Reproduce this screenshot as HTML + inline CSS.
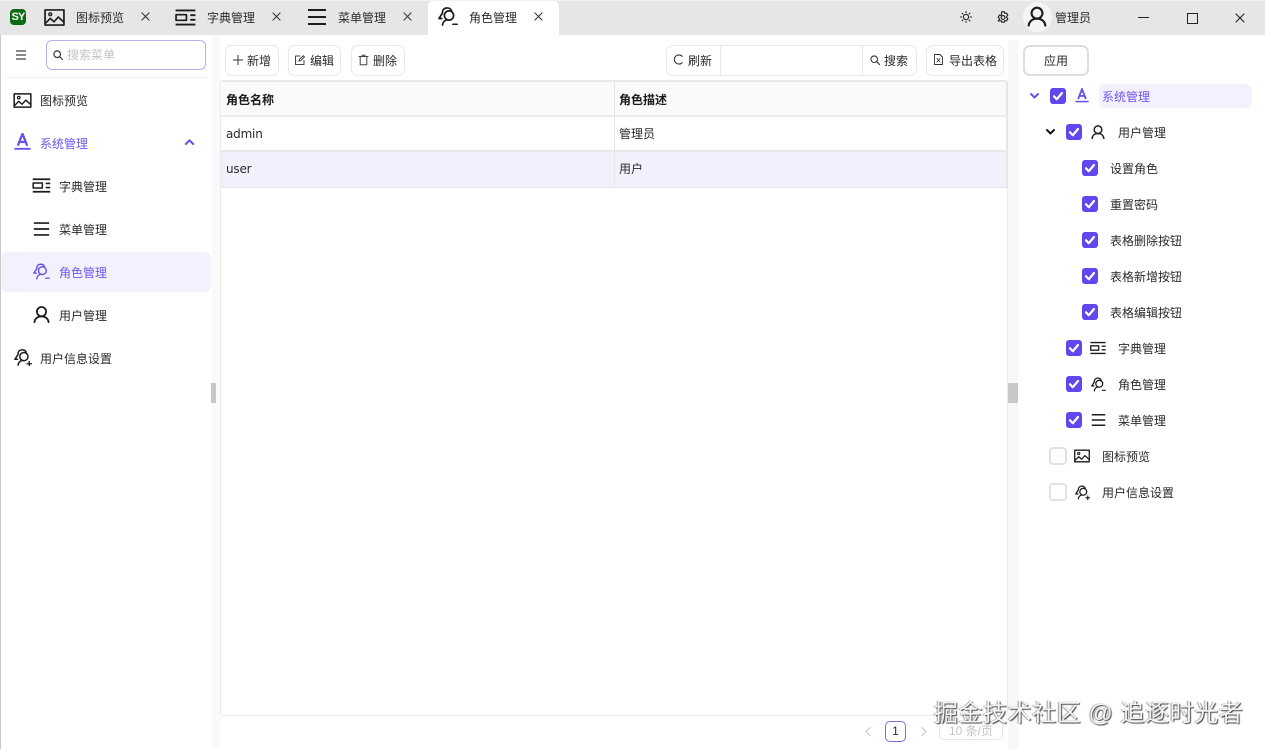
<!DOCTYPE html>
<html lang="zh"><head><meta charset="utf-8"><title>角色管理</title>
<style>
*{box-sizing:border-box}
html,body{margin:0;padding:0;width:1265px;height:749px;overflow:hidden;background:#fff;font-family:"Liberation Sans","Noto Sans CJK SC",sans-serif;font-size:12px;color:#2a2a2a}
.a{position:absolute}
.t{position:absolute;line-height:18px;height:18px;white-space:nowrap;font-size:12px;margin-top:1px}
.p{color:#6f55ee}
svg.i{position:absolute;overflow:visible;fill:none;stroke:#1c1c1c;stroke-width:2;stroke-linecap:round;stroke-linejoin:round}
svg.p2{stroke:#6a50ec}
.btn{position:absolute;top:45px;height:31px;border:1px solid #e9e9e9;border-radius:7px;background:#fff;box-shadow:0 0 1px #eee}
.cb{position:absolute;width:16px;height:16px;border-radius:3px;background:#6049ec}
.cb svg{position:absolute;left:2px;top:2px;width:12px;height:12px;fill:none;stroke:#fff;stroke-width:2.2;stroke-linecap:round;stroke-linejoin:round}
.un{position:absolute;width:18px;height:18px;border-radius:4px;background:#fff;border:2px solid #e2e2e2}
.wm{position:absolute;left:934px;top:698px;font-size:24px;line-height:32px;letter-spacing:.55px;white-space:nowrap;color:#f4f4f4;text-shadow:1px 1px 1px #444,-1px 0 1px #999;font-family:"Liberation Sans","Noto Sans CJK SC",sans-serif}
.cell{position:absolute;line-height:18px;height:18px;font-size:12px;white-space:nowrap}
.en{font-family:"DejaVu Sans",sans-serif;font-size:12px;letter-spacing:-.2px}
</style></head><body>
<svg width="0" height="0" style="position:absolute"><defs>
<symbol id="img" viewBox="0 0 22 18"><rect x="1" y="1" width="20" height="16" fill="none" stroke-width="1.8"/><circle cx="6.5" cy="5.5" r="1.5" stroke-width="1.5"/><path d="M1.5 15l5-5 4 3.500 4.500-5 6 5.500" stroke-width="1.700"/></symbol>
<symbol id="dict" viewBox="0 0 22 18"><path d="M0.500 1.500h21M0.500 16.500h21" stroke-width="2" stroke-linecap="butt"/><rect x="1" y="6" width="11" height="6" stroke-width="1.800"/><path d="M16 6.500h5.500M16 11.500h5.500" stroke-width="2" stroke-linecap="butt"/></symbol>
<symbol id="menu" viewBox="0 0 20 18"><path d="M1 2h18M1 9h18M1 16h18" stroke-linecap="butt" stroke-width="2"/></symbol>
<symbol id="role" viewBox="0 0 20 19"><circle cx="11" cy="8.500" r="4.600" stroke-width="1.700"/><path d="M13.500 3.500C12.500 1.500 10.500 .8 8.500 1 5.500 1.300 4.300 3.500 4.500 6L1 11.500h2.800M4.500 18c.3-3 2.500-5 5-5.300" stroke-width="1.700"/><path d="M14.800 17.300h4.400" stroke-width="1.500"/></symbol>
<symbol id="roleadd" viewBox="0 0 20 19"><circle cx="11" cy="8.500" r="4.600" stroke-width="1.700"/><path d="M13.500 3.500C12.500 1.500 10.500 .8 8.500 1 5.500 1.300 4.300 3.500 4.500 6L1 11.500h2.800M4.500 18c.3-3 2.500-5 5-5.300" stroke-width="1.700"/><path d="M14.500 16.500h5M17 14v5" stroke-width="1.500"/></symbol>
<symbol id="user" viewBox="0 0 18 18"><circle cx="9" cy="6" r="4.900" stroke-width="1.900"/><path d="M1.500 17.200c.4-3.900 3.400-6.200 7.500-6.200s7.100 2.300 7.500 6.200" stroke-width="1.900"/></symbol>
<symbol id="A" viewBox="0 0 18 18"><path d="M4 13.500L9 .8l5 12.700M5.600 9.500h6.800" stroke-width="2.400" stroke-linecap="butt" stroke-linejoin="miter"/><path d="M0.500 16.800h17" stroke-width="2" stroke-linecap="butt"/></symbol>
<symbol id="x" viewBox="0 0 10 10"><path d="M1 1l8 8M9 1l-8 8" stroke-width="1.100"/></symbol>
<symbol id="ok" viewBox="0 0 12 12"><path d="M2 6.300l2.800 2.900L10 3"/></symbol>
</defs></svg>

<!-- title bar -->
<div class="a" style="left:0;top:0;width:1265px;height:35px;background:#e6e6e6;border-top:1px solid #f2f2f2"></div>
<div class="a" style="left:10px;top:9px;width:16px;height:16px;background:#0b6a13;border-radius:4px;color:#fff;font-size:11px;font-weight:bold;line-height:16px;text-align:center;letter-spacing:-.8px">SY</div>
<svg class="i" style="left:44px;top:9px" width="21" height="17"><use href="#img"/></svg>
<div class="t" style="left:76px;top:8px">图标预览</div>
<svg class="i" style="left:141px;top:12px;stroke:#333" width="9" height="9"><use href="#x"/></svg>
<svg class="i" style="left:175px;top:9px" width="21" height="17"><use href="#dict"/></svg>
<div class="t" style="left:207px;top:8px">字典管理</div>
<svg class="i" style="left:272px;top:12px;stroke:#333" width="9" height="9"><use href="#x"/></svg>
<svg class="i" style="left:307px;top:8px" width="20" height="18"><use href="#menu"/></svg>
<div class="t" style="left:338px;top:8px">菜单管理</div>
<svg class="i" style="left:403px;top:12px;stroke:#333" width="9" height="9"><use href="#x"/></svg>
<div class="a" style="left:428px;top:1px;width:131px;height:35px;background:#fff;border-radius:5px 5px 0 0"></div>
<svg class="i" style="left:438px;top:7px" width="20" height="19"><use href="#role"/></svg>
<div class="t" style="left:469px;top:8px">角色管理</div>
<svg class="i" style="left:534px;top:12px;stroke:#333" width="9" height="9"><use href="#x"/></svg>
<svg class="i" style="left:960px;top:11px;stroke-width:1" width="12" height="12" viewBox="0 0 12 12"><circle cx="6" cy="6" r="2.600"/><path d="M6 .5v1.200M6 10.300v1.200M.5 6h1.200M10.300 6h1.200M2.100 2.100l.9.9M9 9l.9.9M2.100 9.900L3 9M9 3l.9-.9"/></svg>
<svg class="i" style="left:997px;top:11px;stroke-width:1.100" width="12" height="13" viewBox="0 0 12 13"><path d="M4.700 .8h2.600l.5 1.600 1.700-.4 1.300 2.200-1.200 1.300v1l1.200 1.300-1.300 2.200-1.700-.4-.5 1.600H4.700l-.5-1.600-1.700.4L1.200 9.800l1.200-1.300v-1L1.200 6.200 2.500 4l1.700.4z"/><circle cx="6" cy="6.500" r="1.900"/></svg>
<div class="a" style="left:1023px;top:2px;width:29px;height:30px;border-radius:50%;background:#f4f4f4"></div>
<svg class="i" style="left:1027px;top:6px;stroke-width:2" width="20" height="21"><use href="#user"/></svg>
<div class="t" style="left:1055px;top:8px">管理员</div>
<div class="a" style="left:1138px;top:17px;width:11px;height:1px;background:#222"></div>
<div class="a" style="left:1187px;top:13px;width:11px;height:11px;border:1.200px solid #222"></div>
<svg class="i" style="left:1235px;top:13px;stroke:#222" width="10" height="10"><use href="#x"/></svg>

<!-- sidebar -->
<div class="a" style="left:0;top:35px;width:1px;height:714px;background:#c9c9c9"></div>
<div class="a" style="left:1px;top:35px;width:211px;height:714px;background:#fff"></div>
<div class="a" style="left:212px;top:35px;width:8px;height:714px;background:#fafafa"></div>
<svg class="i" style="left:16px;top:50px;stroke:#444;stroke-width:1.200" width="10" height="10" viewBox="0 0 10 10"><path d="M0 1h10M0 5h10M0 9h10" stroke-linecap="butt"/></svg>
<div class="a" style="left:46px;top:40px;width:160px;height:30px;border:1px solid #b7aeea;border-radius:6px;background:#fff"></div>
<svg class="i" style="left:53px;top:50px;stroke:#333;stroke-width:1.200" width="10" height="10" viewBox="0 0 10 10"><circle cx="4.200" cy="4.200" r="3.300"/><path d="M6.700 6.700L9.500 9.500"/></svg>
<div class="t" style="left:67px;top:45px;color:#c4c4c4">搜索菜单</div>
<div class="a" style="left:4px;top:77px;width:204px;height:1px;background:#f1f1f1"></div>

<svg class="i" style="left:13px;top:93px" width="19" height="15"><use href="#img"/></svg>
<div class="t" style="left:40px;top:91px">图标预览</div>
<svg class="i p2" style="left:14px;top:133px" width="17" height="17"><use href="#A"/></svg>
<div class="t p" style="left:40px;top:134px">系统管理</div>
<svg class="i p2" style="left:185px;top:139px;stroke-width:2" width="9" height="6" viewBox="0 0 9 6"><path d="M.8 5L4.500 1.300 8.200 5"/></svg>
<svg class="i" style="left:32px;top:178px" width="19" height="15"><use href="#dict"/></svg>
<div class="t" style="left:59px;top:177px">字典管理</div>
<svg class="i" style="left:33px;top:221px" width="17" height="16"><use href="#menu"/></svg>
<div class="t" style="left:59px;top:220px">菜单管理</div>
<div class="a" style="left:1px;top:252px;width:210px;height:40px;background:#f4f1fe;border-radius:6px"></div>
<svg class="i p2" style="left:33px;top:263px" width="17" height="17"><use href="#role"/></svg>
<div class="t p" style="left:59px;top:263px">角色管理</div>
<svg class="i" style="left:33px;top:306px" width="17" height="17"><use href="#user"/></svg>
<div class="t" style="left:59px;top:306px">用户管理</div>
<svg class="i" style="left:14px;top:349px" width="18" height="17"><use href="#roleadd"/></svg>
<div class="t" style="left:40px;top:349px">用户信息设置</div>
<div class="a" style="left:211px;top:383px;width:5px;height:20px;background:#c8c8c8"></div>

<!-- toolbar -->
<div class="btn" style="left:225px;width:54px"></div>
<svg class="i" style="left:233px;top:55px;stroke:#333;stroke-width:1" width="10" height="10" viewBox="0 0 10 10"><path d="M5 0v10M0 5h10" stroke-linecap="butt"/></svg>
<div class="t" style="left:247px;top:51px">新增</div>
<div class="btn" style="left:288px;width:53px"></div>
<svg class="i" style="left:295px;top:55px;stroke:#444;stroke-width:1" width="10" height="10" viewBox="0 0 10 10"><path d="M9 5.500V9.500H.5V1H5M4 6.200l.3-1.700L8.300.7l1.200 1.200-4 3.900z"/></svg>
<div class="t" style="left:310px;top:51px">编辑</div>
<div class="btn" style="left:351px;width:54px"></div>
<svg class="i" style="left:359px;top:55px;stroke:#444;stroke-width:1" width="9" height="10" viewBox="0 0 9 10"><path d="M0 1.500h9M3 1.500V.3h3v1.200M1.200 1.500v8.200h6.600V1.500"/></svg>
<div class="t" style="left:373px;top:51px">删除</div>
<div class="btn" style="left:666px;width:251px"></div>
<div class="a" style="left:720px;top:46px;width:1px;height:29px;background:#e9e9e9"></div>
<div class="a" style="left:862px;top:46px;width:1px;height:29px;background:#e9e9e9"></div>
<svg class="i" style="left:673px;top:54px;stroke:#333;stroke-width:1.100" width="10" height="11" viewBox="0 0 10 11"><path d="M9.200 2.300A4.600 4.600 0 1 0 9.200 8.700"/></svg>
<div class="t" style="left:688px;top:51px">刷新</div>
<svg class="i" style="left:870px;top:55px;stroke:#333;stroke-width:1.100" width="10" height="10" viewBox="0 0 10 10"><circle cx="4.200" cy="4.200" r="3.300"/><path d="M6.700 6.700L9.500 9.500"/></svg>
<div class="t" style="left:884px;top:51px">搜索</div>
<div class="btn" style="left:926px;width:78px"></div>
<svg class="i" style="left:934px;top:54px;stroke:#333;stroke-width:.9" width="9" height="11" viewBox="0 0 9 11"><path d="M.5.500h5.500l2.500 2.500v7.500h-8zM3 4.500l3 3.500M6 4.500L3 8"/></svg>
<div class="t" style="left:949px;top:51px">导出表格</div>

<!-- table -->
<div class="a" style="left:220px;top:80px;width:788px;height:636px;border:1px solid #ebebeb;border-top:2px solid #e8e8e8;border-radius:3px;background:#fff"></div>
<div class="a" style="left:222px;top:82px;width:785px;height:33px;background:#fafafa"></div>
<div class="a" style="left:221px;top:115px;width:786px;height:2px;background:#ececec"></div>
<div class="a" style="left:221px;top:150px;width:786px;height:2px;background:#e9e9ec"></div>
<div class="a" style="left:221px;top:152px;width:786px;height:35px;background:#f3f0fd"></div>
<div class="a" style="left:221px;top:187px;width:786px;height:1px;background:#e7e5f0"></div>
<div class="a" style="left:614px;top:82px;width:1px;height:105px;background:#e6e6e6"></div>
<div class="a" style="left:1006px;top:82px;width:2px;height:105px;background:#e6e6e6"></div>
<div class="cell" style="left:226px;top:91px;font-weight:bold;color:#1a1a1a">角色名称</div>
<div class="cell" style="left:619px;top:91px;font-weight:bold;color:#1a1a1a">角色描述</div>
<div class="cell en" style="left:226px;top:125px">admin</div>
<div class="cell" style="left:619px;top:125px">管理员</div>
<div class="cell en" style="left:226px;top:160px">user</div>
<div class="cell" style="left:619px;top:160px">用户</div>

<!-- pagination -->
<svg class="i" style="left:865px;top:727px;stroke:#c4c4c4;stroke-width:1" width="6" height="9" viewBox="0 0 6 9"><path d="M5 .5L1 4.500 5 8.500"/></svg>
<div class="a" style="left:885px;top:721px;width:21px;height:21px;border:1px solid #7d68e8;border-radius:5px;text-align:center;line-height:19px;font-size:12px">1</div>
<svg class="i" style="left:921px;top:727px;stroke:#c4c4c4;stroke-width:1" width="6" height="9" viewBox="0 0 6 9"><path d="M1 .5L5 4.500 1 8.500"/></svg>
<div class="a" style="left:939px;top:721px;width:64px;height:19px;border:1px solid #e6e6e6;border-radius:5px;color:#c4c4c4;text-align:center;line-height:18px;font-size:12px">10 条/页</div>

<!-- right gutter -->
<div class="a" style="left:1008px;top:40px;width:10px;height:709px;background:#f7f7f7"></div>
<div class="a" style="left:1008px;top:383px;width:10px;height:20px;background:#c8c8c8"></div>

<!-- tree -->
<div class="a" style="left:1023px;top:45px;width:66px;height:31px;border:2px solid #dedede;border-radius:7px;background:#fff"></div>
<div class="t" style="left:1044px;top:51px">应用</div>
<div class="a" style="left:1099px;top:84px;width:153px;height:24px;background:#f4f1fe;border-radius:6px"></div>
<svg class="i p2" style="left:1030px;top:93px;stroke-width:2" width="9" height="6" viewBox="0 0 9 6"><path d="M1 1l3.500 3.500L8 1"/></svg>
<div class="cb" style="left:1050px;top:88px"><svg><use href="#ok"/></svg></div>
<svg class="i p2" style="left:1075px;top:88px" width="14" height="15"><use href="#A"/></svg>
<div class="t p" style="left:1102px;top:87px">系统管理</div>

<svg class="i" style="left:1046px;top:129px;stroke:#111;stroke-width:2" width="9" height="6" viewBox="0 0 9 6"><path d="M1 1l3.500 3.500L8 1"/></svg>
<div class="cb" style="left:1066px;top:124px"><svg><use href="#ok"/></svg></div>
<svg class="i" style="left:1091px;top:125px" width="14" height="14"><use href="#user"/></svg>
<div class="t" style="left:1118px;top:123px">用户管理</div>

<div class="cb" style="left:1082px;top:160px"><svg><use href="#ok"/></svg></div>
<div class="t" style="left:1110px;top:159px">设置角色</div>
<div class="cb" style="left:1082px;top:196px"><svg><use href="#ok"/></svg></div>
<div class="t" style="left:1110px;top:195px">重置密码</div>
<div class="cb" style="left:1082px;top:232px"><svg><use href="#ok"/></svg></div>
<div class="t" style="left:1110px;top:231px">表格删除按钮</div>
<div class="cb" style="left:1082px;top:268px"><svg><use href="#ok"/></svg></div>
<div class="t" style="left:1110px;top:267px">表格新增按钮</div>
<div class="cb" style="left:1082px;top:304px"><svg><use href="#ok"/></svg></div>
<div class="t" style="left:1110px;top:303px">表格编辑按钮</div>

<div class="cb" style="left:1066px;top:340px"><svg><use href="#ok"/></svg></div>
<svg class="i" style="left:1090px;top:341px;stroke-width:1.800" width="16" height="14"><use href="#dict"/></svg>
<div class="t" style="left:1118px;top:339px">字典管理</div>
<div class="cb" style="left:1066px;top:376px"><svg><use href="#ok"/></svg></div>
<svg class="i" style="left:1091px;top:377px" width="15" height="15"><use href="#role"/></svg>
<div class="t" style="left:1118px;top:375px">角色管理</div>
<div class="cb" style="left:1066px;top:412px"><svg><use href="#ok"/></svg></div>
<svg class="i" style="left:1091px;top:413px" width="15" height="14"><use href="#menu"/></svg>
<div class="t" style="left:1118px;top:411px">菜单管理</div>
<div class="un" style="left:1049px;top:447px"></div>
<svg class="i" style="left:1074px;top:449px" width="16" height="14"><use href="#img"/></svg>
<div class="t" style="left:1102px;top:447px">图标预览</div>
<div class="un" style="left:1049px;top:483px"></div>
<svg class="i" style="left:1075px;top:485px" width="15" height="15"><use href="#roleadd"/></svg>
<div class="t" style="left:1102px;top:483px">用户信息设置</div>

<div class="wm">掘金技术社区 @ 追逐时光者</div>
</body></html>
